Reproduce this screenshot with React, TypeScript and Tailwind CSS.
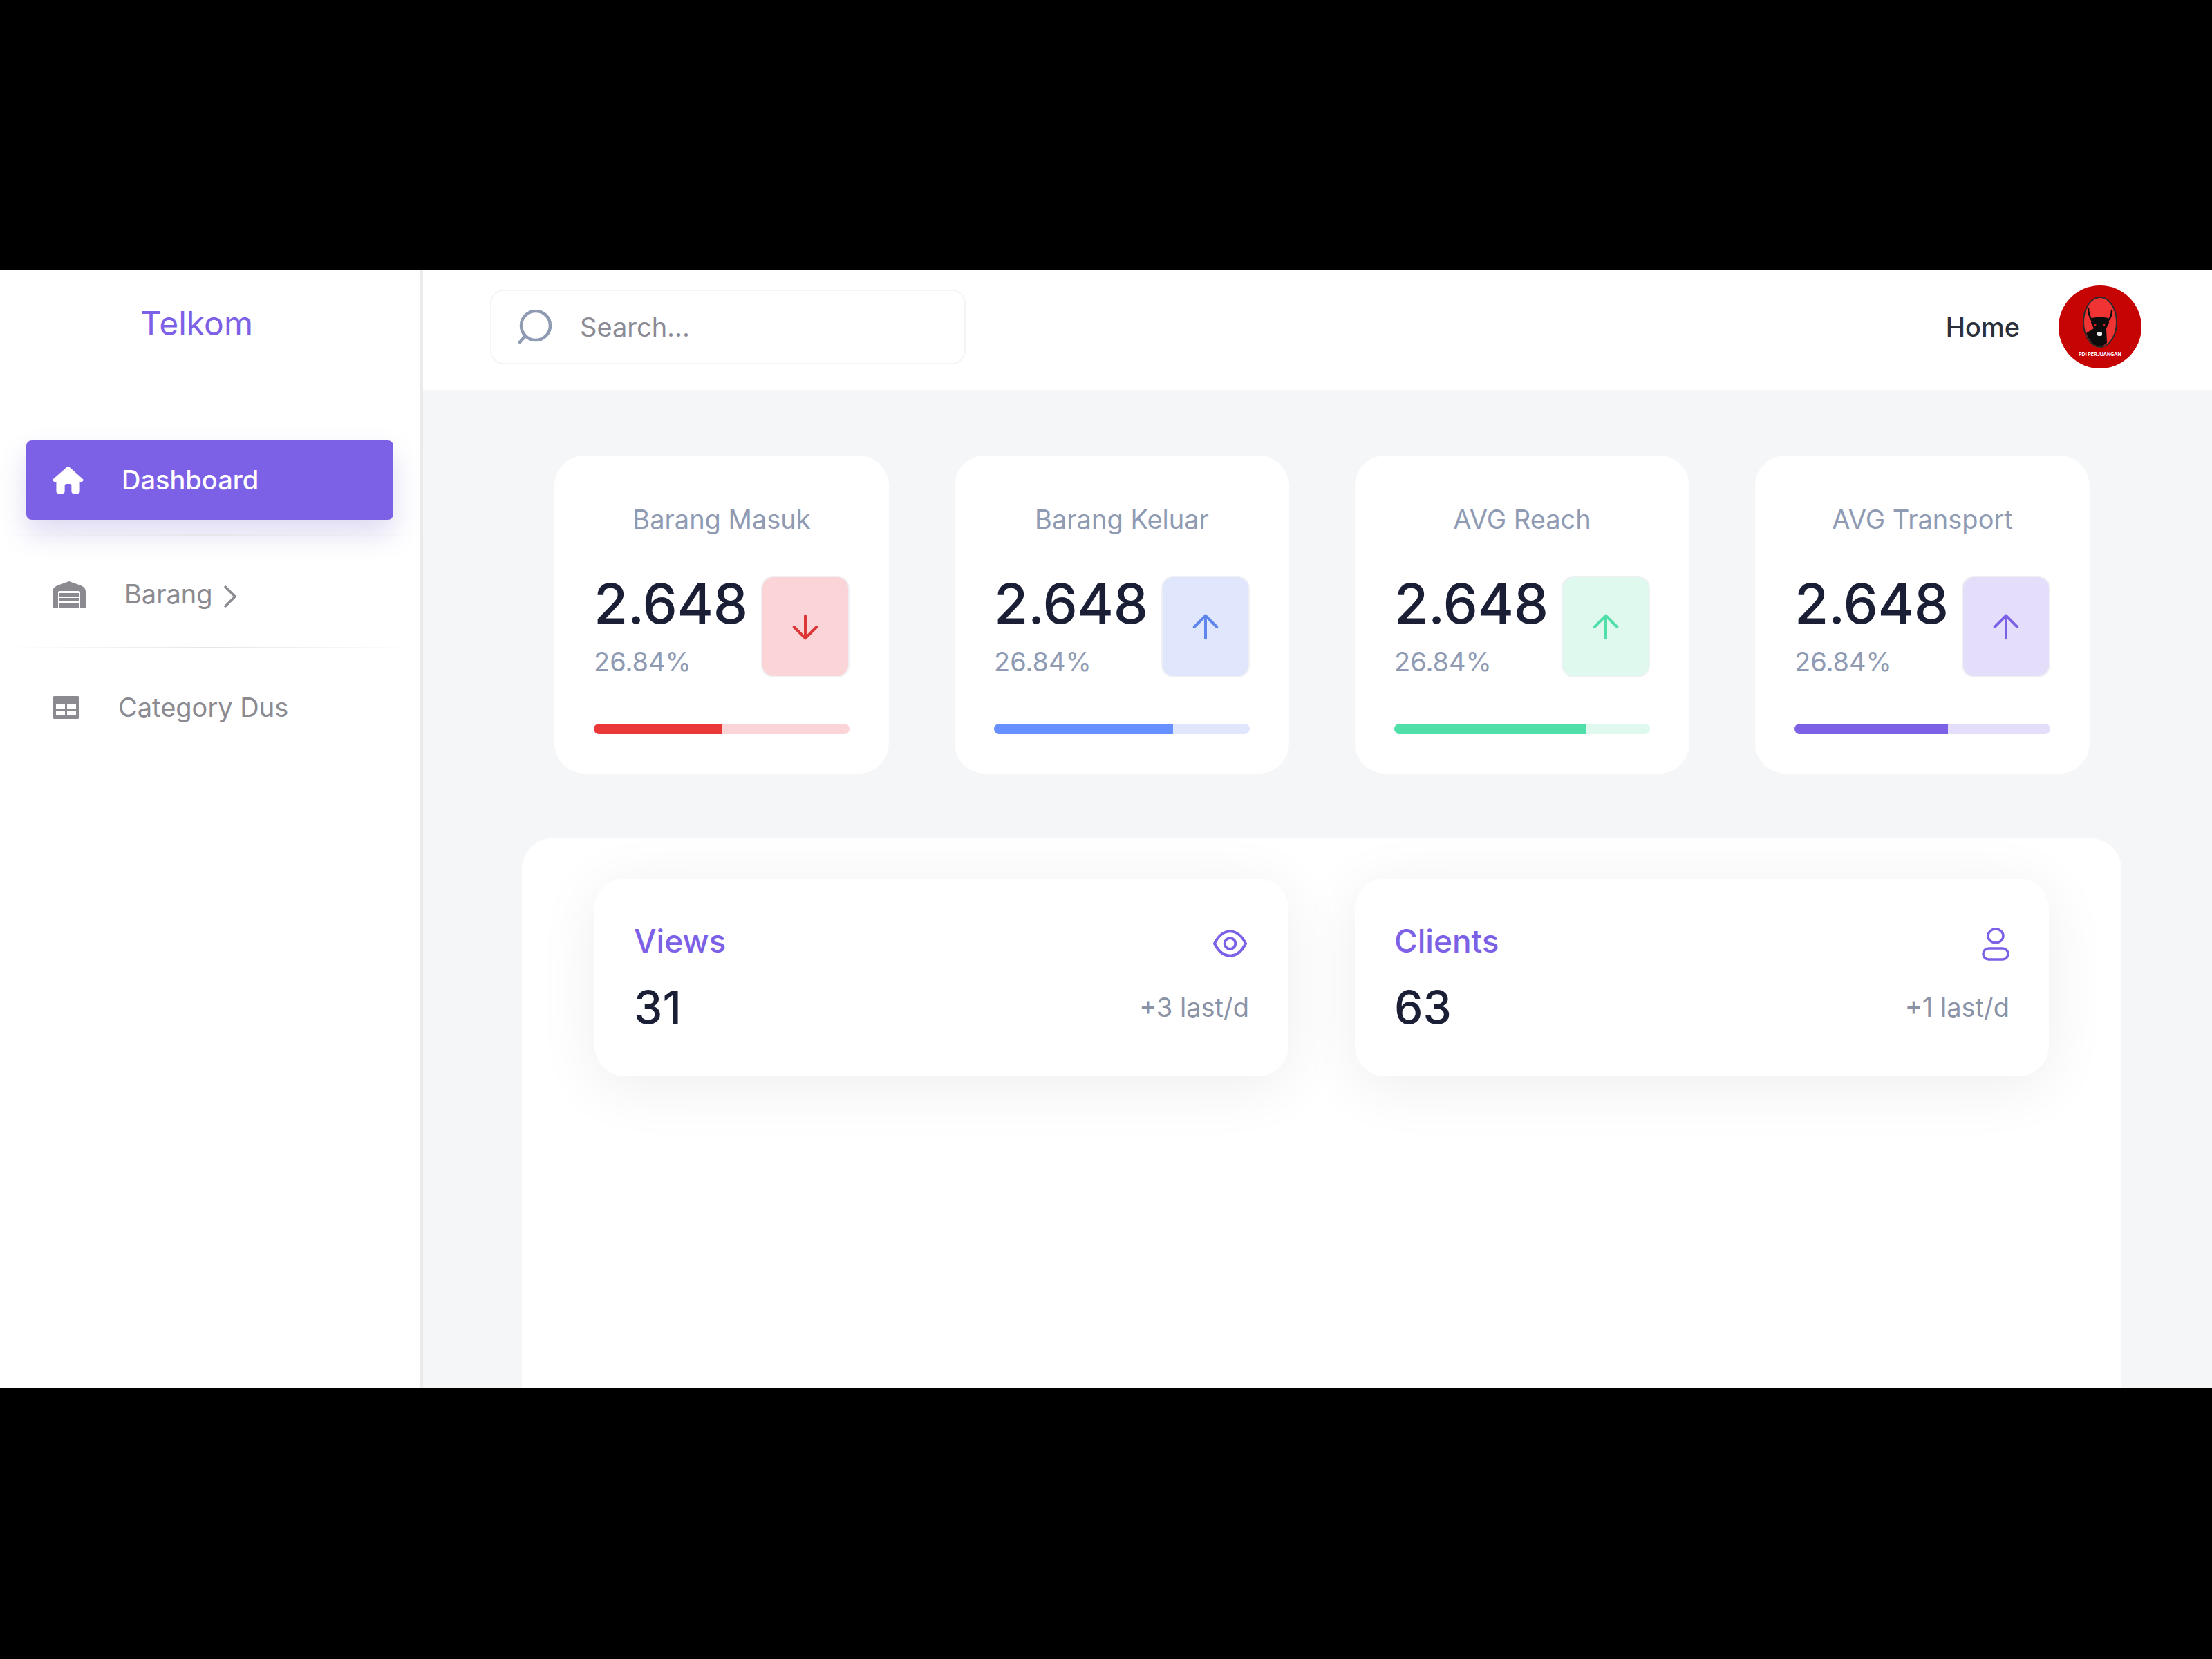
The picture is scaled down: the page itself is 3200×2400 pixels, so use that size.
import React from "react";
import { ArrowDown, ArrowUp, ChevronRight } from "lucide-react";

function Divider() {
  return <div className="h-[2px] w-full bg-gradient-to-r from-transparent via-[#e6e6ea] to-transparent" />;
}

function HomeIcon() {
  return (
    <svg viewBox="0 0 576 512" className="w-[45px] h-[39px]" fill="#ffffff">
      <path d="M575.8 255.5c0 18-15 32.1-32 32.1h-32l.7 160.2c0 2.7-.2 5.4-.5 8.1V472c0 22.1-17.9 40-40 40H456c-1.100 0-2.200 0-3.300-.1-1.400.1-2.800.1-4.200.1H392c-22.100 0-40-17.900-40-40V360c0-17.700-14.300-32-32-32h-64c-17.700 0-32 14.300-32 32v112c0 22.100-17.900 40-40 40h-55.900c-1.500 0-3-.1-4.500-.2-1.200.1-2.400.2-3.600.2H104c-22.100 0-40-17.900-40-40V360c0-.9 0-1.900.1-2.800v-69.700H32c-18 0-32-14-32-32.100 0-9 3-17 10-24L266.400 8c7-7 15-8 22-8s15 2 21 7l255.400 224.500c8 7 12 15 11 24z" />
    </svg>
  );
}

function WarehouseIcon() {
  return (
    <svg viewBox="0 0 48 38" className="w-[48px] h-[38px]" fill="#8a8a90">
      <path d="M24 0 L41 6 Q48 9 48 15 L48 38 L40 38 L40 16 Q40 14 38 14 L10 14 Q8 14 8 16 L8 38 L0 38 L0 15 Q0 9 7 6 Z" />
      <rect x="10" y="17" width="28" height="5" />
      <rect x="10" y="24" width="28" height="5" />
      <rect x="10" y="31" width="28" height="7" />
    </svg>
  );
}

function TableIcon() {
  return (
    <svg viewBox="0 0 39 33" className="w-[39px] h-[33px]">
      <rect width="39" height="33" rx="3" fill="#8a8a90" />
      <rect x="5" y="11" width="13" height="7" fill="#ffffff" />
      <rect x="21" y="11" width="13" height="7" fill="#ffffff" />
      <rect x="5" y="21" width="13" height="7" fill="#ffffff" />
      <rect x="21" y="21" width="13" height="7" fill="#ffffff" />
    </svg>
  );
}

function SearchIcon() {
  return (
    <svg viewBox="0 0 50 50" className="w-[50px] h-[50px]" fill="none" stroke="#8f9bb3" strokeWidth="4.500" strokeLinecap="round">
      <circle cx="26" cy="23" r="21" />
      <path d="M11 38 L3 47" />
    </svg>
  );
}

function EyeIcon() {
  return (
    <svg viewBox="0 0 50 40" className="w-[49px] h-[40px] mt-[12px] mr-[3px]" fill="none" stroke="#7c60e6" strokeWidth="4" strokeLinejoin="round">
      <path d="M2 20 C8 8 16 2 25 2 C34 2 42 8 48 20 C42 32 34 38 25 38 C16 38 8 32 2 20 Z" />
      <circle cx="25" cy="20" r="8" />
    </svg>
  );
}

function PersonIcon() {
  return (
    <svg viewBox="0 0 40 48" className="w-[40px] h-[48px] mt-[9px]" fill="none" stroke="#7c60e6" strokeWidth="3.500">
      <ellipse cx="20" cy="12" rx="11" ry="10" />
      <rect x="2" y="30" width="36" height="16" rx="8" />
    </svg>
  );
}

function PartyLogo() {
  return (
    <div className="w-[120px] h-[120px] rounded-full bg-[#c70404] flex flex-col items-center shrink-0 overflow-hidden pt-[16px]">
      <svg viewBox="0 0 50 74" className="w-[50px] h-[74px]">
        <ellipse cx="25" cy="37" rx="24" ry="36" fill="#f03333" stroke="#2a2a2a" strokeWidth="2" />
        <path d="M13 34 C9 28 8 23 8 17 M37 34 C41 30 42 26 42 20" fill="none" stroke="#0c0c0c" strokeWidth="2.500" strokeLinecap="round" />
        <path d="M13 31 Q25 28 37 31 L38 38 L34 46 L35 67 Q30 72 25 72 Q12 72 5 53 L16 46 L12 38 Z" fill="#0c0c0c" />
        <rect x="21" y="51" width="7" height="6" rx="2" fill="#e8e8e8" />
        <circle cx="18" cy="41" r="1.500" fill="#d02020" />
        <circle cx="31" cy="41" r="1.500" fill="#d02020" />
      </svg>
      <span className="mt-[6px] text-[7px] leading-[8px] font-bold text-white whitespace-nowrap">PDI PERJUANGAN</span>
    </div>
  );
}

type StatProps = { title: string; track: string; fill: string; arrow: string; pct: string; down?: boolean };

function StatCard({ title, track, fill, arrow, pct, down }: StatProps) {
  const Icon = down ? ArrowDown : ArrowUp;
  return (
    <div className="bg-white rounded-[44px] h-[460px] flex flex-col pt-[69px] px-[57px]">
      <div className="text-center text-[38px] leading-[46px] text-[#8f9bb3]">{title}</div>
      <div className="flex justify-between items-start mt-[59px]">
        <div className="flex flex-col -mt-[9px]">
          <div className="text-[80px] leading-[97px] font-medium text-[#1a1f36] tracking-[-0.4px]">2.648</div>
          <div className="text-[38px] leading-[46px] text-[#8f9bb3] mt-[13px]">26.84%</div>
        </div>
        <div className="w-[128px] h-[147px] rounded-[18px] flex items-center justify-center border-2 border-[#eef0f3]" style={{ backgroundColor: track }}>
          <Icon size={56} color={arrow} strokeWidth={1.7} />
        </div>
      </div>
      <div className="mt-[67px] h-[15px] rounded-full overflow-hidden" style={{ backgroundColor: track }}>
        <div className="h-full" style={{ width: pct, backgroundColor: fill }} />
      </div>
    </div>
  );
}

function MetricCard({ title, value, note, icon }: { title: string; value: string; note: string; icon: React.ReactNode }) {
  return (
    <div className="bg-white rounded-[44px] h-[286px] px-[57px] pt-[62px] shadow-[0_14px_90px_rgba(0,0,0,0.07)]">
      <div className="flex justify-between items-start h-[70px]">
        <div className="text-[46px] leading-[56px] font-medium text-[#7c60e6]">{title}</div>
        {icon}
      </div>
      <div className="flex justify-between items-center mt-[14px] h-[80px]">
        <div className="text-[66px] leading-[80px] font-medium text-[#1a1f36]">{value}</div>
        <div className="text-[38px] leading-[46px] text-[#8a92a6]">{note}</div>
      </div>
    </div>
  );
}

export default function App() {
  return (
    <div className="h-[2400px] w-[3200px] bg-black pt-[390px] font-['Inter',sans-serif]">
      <div className="h-[1618px] flex overflow-hidden">
        <aside className="w-[612px] bg-white border-r-[4px] border-[#ebebeb] flex flex-col shrink-0">
          <div className="h-[247px] pt-[49px] pl-[203px] text-[48px] leading-[58px] text-[#7c60e6]">Telkom</div>
          <div className="pl-[38px] pr-[39px]">
            <div className="h-[115px] rounded-[8px] bg-[#7c60e6] flex items-center pl-[38px] shadow-[0_20px_40px_rgba(90,70,190,0.2)]">
              <HomeIcon />
              <span className="ml-[55px] text-[38px] font-medium text-white">Dashboard</span>
            </div>
          </div>
          <div className="mt-[21px]"><Divider /></div>
          <div className="h-[161px] flex items-center pl-[76px] pt-[8px]">
            <WarehouseIcon />
            <span className="ml-[56px] text-[38px] text-[#8a8a90]">Barang</span>
            <ChevronRight size={56} color="#8a8a90" strokeWidth={1.5} className="-ml-[3px] mt-[6px]" />
          </div>
          <Divider />
          <div className="h-[170px] flex items-center pl-[76px]">
            <TableIcon />
            <span className="ml-[56px] text-[38px] text-[#8a8a90]">Category Dus</span>
          </div>
        </aside>
        <main className="flex-1 flex flex-col bg-[#f5f6f8] min-w-0">
          <header className="h-[174px] bg-white flex items-center pl-[97px] pr-[102px] pb-[8px] shrink-0">
            <div className="w-[688px] h-[108px] rounded-[20px] border-2 border-[#f3f4f6] flex items-center pl-[38px]">
              <SearchIcon />
              <span className="ml-[40px] text-[38px] text-[#8a8a94]">Search...</span>
            </div>
            <div className="ml-auto text-[38px] font-medium text-[#2b2f3a]">Home</div>
            <div className="ml-[56px]"><PartyLogo /></div>
          </header>
          <div className="grid grid-cols-4 gap-x-[95px] pl-[190px] pr-[177px] pt-[95px]">
            <StatCard title="Barang Masuk" track="#fad4d6" fill="#ea3838" arrow="#dc3535" pct="50%" down />
            <StatCard title="Barang Keluar" track="#e0e7fd" fill="#6690ff" arrow="#5d85ea" pct="70%" />
            <StatCard title="AVG Reach" track="#dff9ee" fill="#4fdfa8" arrow="#4fdfa8" pct="75%" />
            <StatCard title="AVG Transport" track="#e4defa" fill="#7c60e6" arrow="#7c60e6" pct="60%" />
          </div>
          <div className="flex-1 mt-[94px] ml-[143px] mr-[131px] bg-white rounded-t-[44px] px-[105px] pt-[58px]">
            <div className="grid grid-cols-2 gap-x-[96px]">
              <MetricCard title="Views" value="31" note="+3 last/d" icon={<EyeIcon />} />
              <MetricCard title="Clients" value="63" note="+1 last/d" icon={<PersonIcon />} />
            </div>
          </div>
        </main>
      </div>
    </div>
  );
}
